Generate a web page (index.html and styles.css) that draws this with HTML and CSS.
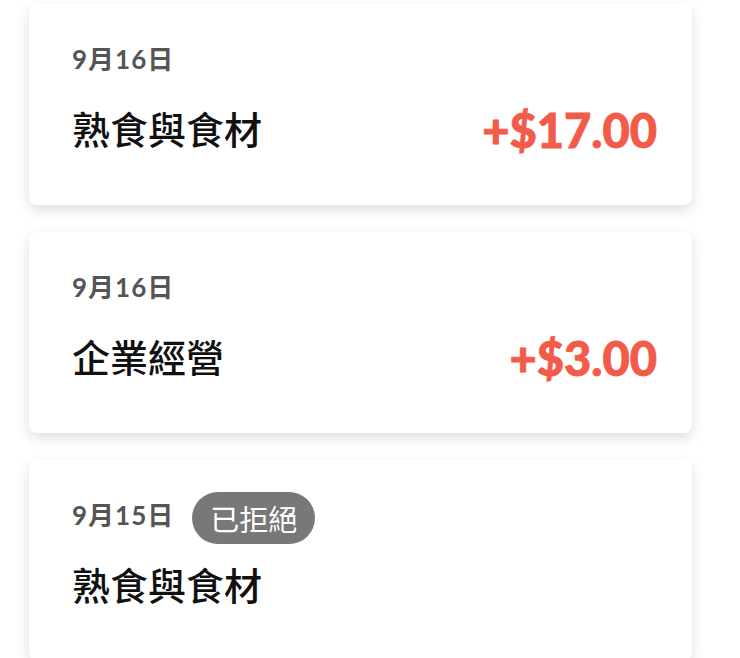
FILE: index.html
```html
<!DOCTYPE html>
<html lang="zh-Hant">
<head>
    <meta charset="UTF-8">
    <meta name="viewport" content="width=device-width, initial-scale=1.0">
    <title>交易紀錄</title>
    <link rel="stylesheet" href="styles.css">
</head>
<body>
    <ul class="tx-list">
        <li class="tx-card">
            <div class="tx-meta">
                <span class="tx-date">9月16日</span>
            </div>
            <div class="tx-row">
                <span class="tx-name">熟食與食材</span>
                <span class="tx-amount">+$17.00</span>
            </div>
        </li>
        <li class="tx-card">
            <div class="tx-meta">
                <span class="tx-date">9月16日</span>
            </div>
            <div class="tx-row">
                <span class="tx-name">企業經營</span>
                <span class="tx-amount">+$3.00</span>
            </div>
        </li>
        <li class="tx-card">
            <div class="tx-meta">
                <span class="tx-date">9月15日</span>
                <span class="tx-badge">已拒絕</span>
            </div>
            <div class="tx-row">
                <span class="tx-name">熟食與食材</span>
            </div>
        </li>
    </ul>
</body>
</html>
```

FILE: styles.css
```css
body {
    margin: 0;
    padding: 0;
    background-color: #ffffff;
    font-family: "Lato", "Noto Sans CJK TC", sans-serif;
    overflow: hidden;
}

.tx-list {
    list-style-type: none;
    margin: 0;
    padding: 4px 0 0 29px;
    width: 663px;
    display: flex;
    flex-direction: column;
    gap: 27px;
}

.tx-card {
    box-sizing: border-box;
    height: 201px;
    padding: 39px 35px 0 43px;
    background-color: #ffffff;
    border-radius: 8px;
    box-shadow: 0 5px 14px rgba(0, 0, 0, 0.13);
}

.tx-meta {
    display: flex;
    align-items: center;
    gap: 18px;
    height: 32px;
}

.tx-date {
    font-size: 26px;
    font-weight: 700;
    color: #555555;
    line-height: 32px;
    letter-spacing: 1px;
}

.tx-badge {
    display: inline-flex;
    align-items: center;
    justify-content: center;
    box-sizing: border-box;
    height: 52px;
    padding: 0 18px;
    border-radius: 26px;
    background-color: #787878;
    color: #ffffff;
    font-family: "Noto Sans CJK TC", sans-serif;
    font-size: 29px;
    margin-top: 6px;
}

.tx-row {
    display: flex;
    justify-content: space-between;
    align-items: center;
    margin-top: 27px;
    height: 50px;
}

.tx-name {
    font-family: "Noto Sans CJK TC", sans-serif;
    font-size: 38px;
    font-weight: 500;
    color: #111111;
}

.tx-amount {
    font-size: 47px;
    font-weight: 900;
    color: #f25a49;
    -webkit-text-stroke: 0.8px #f25a49;
    margin-top: 6px;
}
```
